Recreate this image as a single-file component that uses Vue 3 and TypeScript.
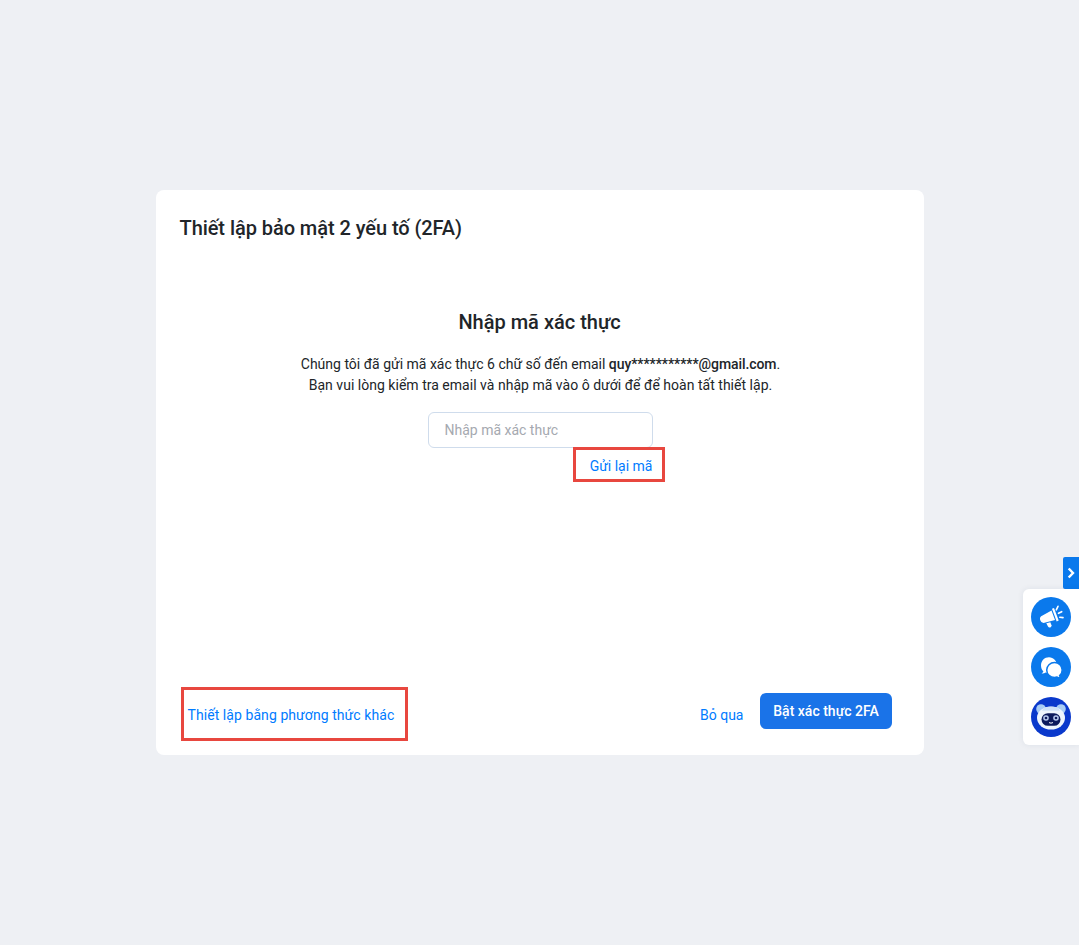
<script setup lang="ts">
const placeholder: string = 'Nhập mã xác thực'
</script>

<template>
  <div class="page">
    <section class="card">
      <h1 class="title">Thiết lập bảo mật 2 yếu tố (2FA)</h1>
      <div class="body">
        <h2 class="heading">Nhập mã xác thực</h2>
        <p class="desc">
          Chúng tôi đã gửi mã xác thực 6 chữ số đến email <b>quy***********@gmail.com</b>.<br />
          <span class="wide">Bạn vui lòng kiểm tra email và nhập mã vào ô dưới để để hoàn tất thiết lập.</span>
        </p>
        <div class="field">
          <input class="input" type="text" :placeholder="placeholder" />
          <div class="resend-row"><a class="link resend">Gửi lại mã</a></div>
        </div>
      </div>
      <footer class="foot">
        <a class="link other">Thiết lập bằng phương thức khác</a>
        <div class="actions">
          <a class="link skip">Bỏ qua</a>
          <button class="primary" type="button">Bật xác thực 2FA</button>
        </div>
      </footer>
    </section>

    <aside class="dock">
      <div class="toggle">
        <svg width="8" height="12" viewBox="0 0 8 12"><path d="M1.7 1.500 6 6l-4.300 4.500" fill="none" stroke="#fff" stroke-width="2.400" /></svg>
      </div>
      <div class="tray">
        <div class="bubble">
          <svg width="40" height="40" viewBox="0 0 40 40" fill="#fff">
            <path d="M11.500 18.500 20.500 13.500 24 23 13.500 25.800a3.800 3.800 0 0 1-2-7.300z" />
            <path d="M21 11.800l2-.9 4.700 12.700-2 .8z" />
            <path d="M15.300 26.300l4-1 1.200 3a1.900 1.900 0 0 1-3.500 1.300z" />
            <path d="M25.300 12.800 27 9.300M27.500 16.300l3.200-1.600M28.800 20.300l3.200.3" stroke="#fff" stroke-width="1.600" stroke-linecap="round" fill="none" />
          </svg>
        </div>
        <div class="bubble">
          <svg width="40" height="40" viewBox="0 0 40 40">
            <path d="M18 10.300c-4.500 0-8 3.500-8 8.200 0 2.500 1 4.700 2.400 6-.3.800-.9 1.400-1.800 1.900 1.500.2 3-.2 4.100-1 1 .5 2.200.8 3.300.8 4.500 0 8-3.500 8-7.800s-3.500-8.100-8-8.100z" fill="#fff" />
            <path d="M23.500 15.500c-4.300 0-7.800 3.300-7.800 7.500s3.500 7.500 7.800 7.500c.9 0 1.800-.2 2.600-.5.900.7 2.300 1 3.900.8-.7-.6-1.200-1.300-1.400-2.200 1.600-1.300 2.600-3.300 2.600-5.600 0-4.200-3.400-7.500-7.700-7.500z" fill="#fff" stroke="#0a79ec" stroke-width="1.500" />
          </svg>
        </div>
        <div class="bubble bot">
          <svg width="40" height="40" viewBox="0 0 40 40">
            <circle cx="20" cy="20" r="20" fill="#0a39cc" />
            <circle cx="10" cy="12" r="4.800" fill="#a9cdf5" />
            <circle cx="30" cy="12" r="4.800" fill="#a9cdf5" />
            <ellipse cx="20" cy="21" rx="14" ry="11.500" fill="#eef5fd" />
            <path d="M13 10.800c4-1.500 10-1.500 14 0l2 3H11z" fill="#cfe2f8" />
            <rect x="10.500" y="16.200" width="19" height="12.600" rx="6.300" fill="#0c1a5c" />
            <circle cx="15" cy="21" r="2.800" fill="#b7c9ee" />
            <circle cx="25" cy="21" r="2.800" fill="#b7c9ee" />
            <circle cx="15" cy="21" r="1.300" fill="#0c1a5c" />
            <circle cx="25" cy="21" r="1.300" fill="#0c1a5c" />
            <path d="M18 25.500c1.200.8 2.800.8 4 0" fill="none" stroke="#fff" stroke-width="1" />
          </svg>
        </div>
      </div>
    </aside>
  </div>
</template>

<style>
html, body { margin: 0; background: #eef0f4; }
</style>

<style scoped>
.page {
  position: relative;
  height: 945px;
  display: flex;
  align-items: center;
  justify-content: center;
  overflow: hidden;
  background: #eef0f4;
  font-family: Roboto, "Noto Sans", sans-serif;
  color: #212529;
}
.card {
  width: 768px;
  height: 565px;
  box-sizing: border-box;
  background: #fff;
  border-radius: 8px;
  padding: 24px;
  display: flex;
  flex-direction: column;
}
.title {
  margin: 0;
  font-size: 20px;
  line-height: 28px;
  font-weight: 500;
  letter-spacing: -0.06px;
}
.body {
  flex: 1;
  display: flex;
  flex-direction: column;
  align-items: center;
  padding-top: 66px;
}
.heading {
  margin: 0 0 18px;
  font-size: 20px;
  line-height: 28px;
  font-weight: 500;
}
.desc {
  margin: 0;
  padding-left: 2px;
  font-size: 14px;
  line-height: 21px;
  text-align: center;
}
.desc b { font-weight: 500; letter-spacing: -0.08px; }
.wide { letter-spacing: 0.02px; }
.field { width: 225px; margin: 16px 0 0 1px; }
.input {
  display: block;
  width: 100%;
  height: 36px;
  box-sizing: border-box;
  padding: 0 16px;
  border: 1px solid #cfdcec;
  border-radius: 6px;
  font: 14px Roboto, "Noto Sans", sans-serif;
  outline: none;
}
.input::placeholder { color: #a5a9b0; opacity: 1; }
.resend-row { display: flex; justify-content: flex-end; }
.link { color: #007bff; font-size: 14px; line-height: 20px; }
.resend {
  margin-top: -1px;
  margin-right: -12px;
  padding: 9px 12px 6px 17px;
  outline: 3px solid #e8473f;
  outline-offset: -3px;
}
.foot {
  display: flex;
  justify-content: space-between;
  align-items: flex-start;
  padding: 0 8px 0 1px;
  margin-bottom: -10px;
}
.other {
  padding: 18px 14px 16px 7px;
  letter-spacing: 0.07px;
  outline: 3px solid #e8473f;
  outline-offset: -3px;
}
.actions { display: flex; align-items: center; gap: 16px; margin-top: 6px; }
.skip { padding-top: 8px; }
.primary {
  width: 132px;
  height: 36px;
  border: 0;
  border-radius: 6px;
  background: #1a73e8;
  color: #fff;
  font: 500 14px Roboto, "Noto Sans", sans-serif;
  padding: 0 0 0 1px;
}
.dock {
  position: absolute;
  right: 0;
  top: 557px;
  display: flex;
  flex-direction: column;
  align-items: flex-end;
}
.toggle {
  width: 16px;
  height: 32px;
  background: #0a79ec;
  border-radius: 2px 0 0 2px;
  display: flex;
  align-items: center;
  justify-content: center;
}
.tray {
  width: 56px;
  height: 156px;
  box-sizing: border-box;
  background: #fff;
  border-radius: 6px 0 0 6px;
  padding: 8px 0 0 8px;
  display: flex;
  flex-direction: column;
  gap: 10px;
  box-shadow: 0 0 6px rgba(30, 50, 90, .08);
}
.bubble {
  width: 40px;
  height: 40px;
  border-radius: 50%;
  background: #0a79ec;
  display: flex;
  align-items: center;
  justify-content: center;
}
.bot { background: none; }
</style>
